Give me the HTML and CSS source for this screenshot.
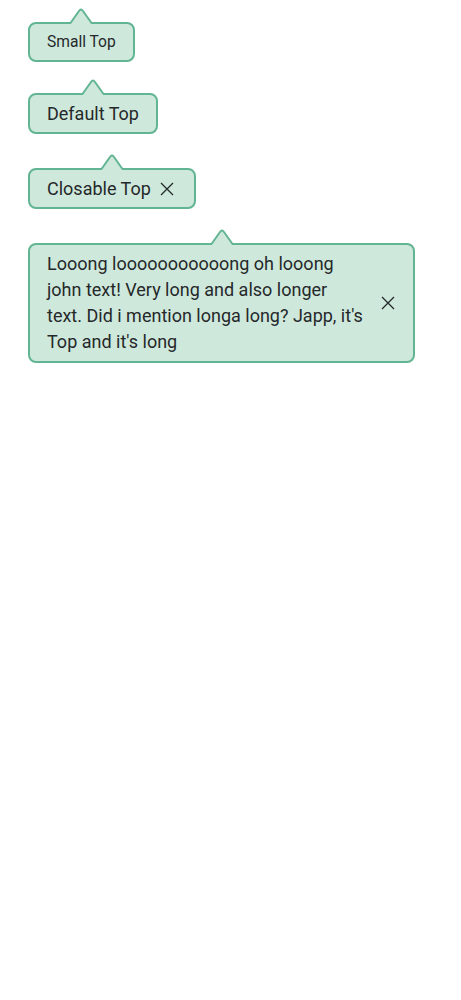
FILE: index.html
```html
<!DOCTYPE html>
<html>
<head>
<meta charset="utf-8">
<link rel="stylesheet" href="styles.css">
</head>
<body>
<div class="page">
  <div class="tip tip--small">
    <svg class="tip__arrow" width="26" height="18" viewBox="0 0 26 18"><path class="tip__arrow-fill" d="M2.5 17 L2.5 16 L11 4 Q13 1 15 4 L23.5 16 L23.5 17 Z"/><path class="tip__arrow-line" d="M0 16 L2.5 16 L11 4 Q13 1 15 4 L23.5 16 L26 16"/></svg>
    <span class="tip__text">Small Top</span>
  </div>
  <div class="tip">
    <svg class="tip__arrow" width="26" height="18" viewBox="0 0 26 18"><path class="tip__arrow-fill" d="M2.5 17 L2.5 16 L11 4 Q13 1 15 4 L23.5 16 L23.5 17 Z"/><path class="tip__arrow-line" d="M0 16 L2.5 16 L11 4 Q13 1 15 4 L23.5 16 L26 16"/></svg>
    <span class="tip__text">Default Top</span>
  </div>
  <div class="tip tip--closable">
    <svg class="tip__arrow" width="26" height="18" viewBox="0 0 26 18"><path class="tip__arrow-fill" d="M2.5 17 L2.5 16 L11 4 Q13 1 15 4 L23.5 16 L23.5 17 Z"/><path class="tip__arrow-line" d="M0 16 L2.5 16 L11 4 Q13 1 15 4 L23.5 16 L26 16"/></svg>
    <span class="tip__text">Closable Top</span>
    <svg class="tip__close" width="16" height="16" viewBox="0 0 16 16"><path d="M2 2 L14 14 M14 2 L2 14"/></svg>
  </div>
  <div class="tip tip--long">
    <svg class="tip__arrow" width="26" height="18" viewBox="0 0 26 18"><path class="tip__arrow-fill" d="M2.5 17 L2.5 16 L11 4 Q13 1 15 4 L23.5 16 L23.5 17 Z"/><path class="tip__arrow-line" d="M0 16 L2.5 16 L11 4 Q13 1 15 4 L23.5 16 L26 16"/></svg>
    <span class="tip__text">Looong looooooooooong oh looong john text! Very long and also longer text. Did i mention longa long? Japp, it's Top and it's long</span>
    <svg class="tip__close" width="16" height="16" viewBox="0 0 16 16"><path d="M2 2 L14 14 M14 2 L2 14"/></svg>
  </div>
</div>
</body>
</html>
```
FILE: styles.css
```css
html, body {
  margin: 0;
  background: #ffffff;
}
.page {
  display: flex;
  flex-direction: column;
  align-items: flex-start;
  gap: 34px;
  padding: 22px 28px;
  font-family: Roboto, "Open Sans", sans-serif;
  color: #25282a;
}
.tip {
  position: relative;
  display: inline-flex;
  align-items: center;
  gap: 8px;
  box-sizing: border-box;
  border: 2px solid #62b593;
  border-radius: 8px;
  background: #cfe8dc;
  padding: 6px 17px;
  font-size: 18px;
  line-height: 25px;
}
.tip--small {
  font-size: 15.6px;
  line-height: 22px;
  padding: 7px 17px;
  margin-bottom: -3px;
}
.tip--closable {
  padding-right: 19px;
}
.tip--long {
  width: 387px;
  line-height: 26px;
  padding: 6px 17px;
  gap: 15px;
}
.tip--long .tip__text {
  width: 318px;
}
.tip__arrow {
  position: absolute;
  top: -17px;
  left: 50%;
  transform: translateX(-50%);
  overflow: visible;
}
.tip__arrow-fill {
  fill: #cfe8dc;
}
.tip__arrow-line {
  fill: none;
  stroke: #62b593;
  stroke-width: 2;
  stroke-linejoin: round;
}
.tip__close {
  flex: none;
}
.tip__close path {
  stroke: #25282a;
  stroke-width: 1.3;
  fill: none;
}
```
